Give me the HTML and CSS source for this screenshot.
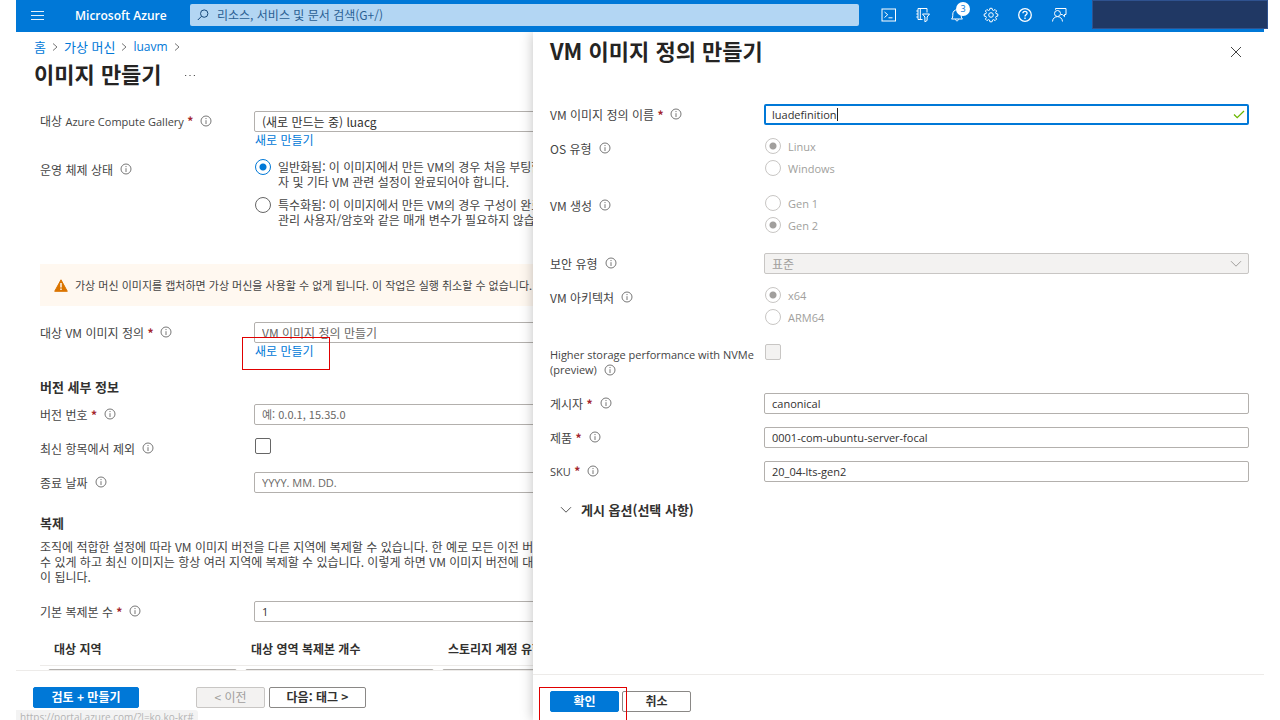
FILE: index.html
```html
<!DOCTYPE html>
<html lang="ko">
<head>
<meta charset="utf-8">
<meta name="viewport" content="width=device-width, initial-scale=1">
<title>이미지 만들기 - Microsoft Azure</title>
<link rel="stylesheet" href="styles.css">
</head>
<body>
<svg class="defs" aria-hidden="true">
  <symbol id="info" viewBox="0 0 12 12"><circle cx="6" cy="6" r="5" fill="none" stroke="currentColor"/><path d="M6 5.2V9M6 3v1.1" stroke="currentColor"/></symbol>
  <symbol id="chevron" viewBox="0 0 12 8"><path d="M1 1.2l5 5 5-5" fill="none" stroke="currentColor"/></symbol>
  <symbol id="crumb" viewBox="0 0 6 10"><path d="M1 1.5L5 5 1 8.500" fill="none" stroke="currentColor"/></symbol>
</svg>
<div class="shell">
  <header class="topbar">
    <button class="icon-btn menu-btn" aria-label="메뉴"><svg width="13" height="10" viewBox="0 0 13 10"><path d="M0 1.500h13M0 5.500h13M0 9.500h13" stroke="currentColor" stroke-width=".9"/></svg></button>
    <a class="brand" href="#">Microsoft Azure</a>
    <label class="search">
      <svg width="12" height="12" viewBox="0 0 12 12"><circle cx="7.200" cy="4.600" r="3.700" fill="none" stroke="currentColor"/><path d="M4.500 7.300L.8 11" stroke="currentColor"/></svg>
      <input class="search-input" type="search" placeholder="리소스, 서비스 및 문서 검색(G+/)" aria-label="검색">
    </label>
    <nav class="tools">
      <button class="icon-btn" aria-label="Cloud Shell"><svg width="16" height="14" viewBox="0 0 16 14"><rect x="1" y="1" width="13.500" height="12" fill="none" stroke="currentColor"/><path d="M3.500 4l3.200 2.700-3.200 2.800M7.500 9.800h4" fill="none" stroke="currentColor"/></svg></button>
      <button class="icon-btn" aria-label="디렉터리 및 구독"><svg width="16" height="16" viewBox="0 0 16 16" fill="none" stroke="currentColor"><path d="M7.500 12.500H3V1.500h9v4M5.300 1.500v11M1.300 4H3M1.300 7H3M1.300 10H3"/><path d="M7.500 7h7l-2.400 3v3.500l-2.200 1.300V10z"/></svg></button>
      <button class="icon-btn" aria-label="알림"><svg width="16" height="16" viewBox="0 0 16 16" fill="none" stroke="currentColor"><path d="M2.500 12c1.300-1 1.300-2.500 1.300-5a4.200 4.200 0 0 1 8.400 0c0 2.500 0 4 1.300 5zM6.500 12.300c0 2 3 2 3 0"/></svg><span class="badge latin">3</span></button>
      <button class="icon-btn" aria-label="설정"><svg width="16" height="16" viewBox="0 0 16 16" fill="none" stroke="currentColor"><circle cx="8" cy="8" r="2.300"/><path d="M6.900 1.300h2.200l.4 1.800 1 .4 1.600-1 1.500 1.500-1 1.600.4 1 1.800.4v2.100l-1.800.4-.4 1 1 1.600-1.500 1.500-1.600-1-1 .4-.4 1.800H6.900l-.4-1.800-1-.4-1.600 1-1.500-1.500 1-1.600-.4-1-1.800-.4V7l1.800-.4.4-1-1-1.600 1.500-1.500 1.600 1 1-.4z"/></svg></button>
      <button class="icon-btn" aria-label="도움말"><svg width="16" height="16" viewBox="0 0 16 16" fill="none" stroke="currentColor"><circle cx="8" cy="8" r="6.300" stroke-width="1.300"/><path d="M5.900 6.300c0-2.700 4.200-2.600 4.200-.1C10.100 7.800 8 7.700 8 9.500M8 10.600v1.300" stroke-width="1.300"/></svg></button>
      <button class="icon-btn" aria-label="피드백"><svg width="16" height="16" viewBox="0 0 16 16" fill="none" stroke="currentColor"><circle cx="6.500" cy="6.500" r="3"/><path d="M1.500 14.500c.4-6.500 9.600-6.500 10 0M4.500 2.700V1.500H15v6h-1.500v2.200l-2.200-2.200h-1.400"/></svg></button>
    </nav>
    <div class="account"></div>
  </header>

  <div class="workspace">
    <main class="blade">
      <nav class="crumbs">
        <a href="#">홈</a><svg class="crumb"><use href="#crumb"/></svg>
        <a href="#">가상 머신</a><svg class="crumb"><use href="#crumb"/></svg>
        <a class="crumb-latin" href="#">luavm</a><svg class="crumb"><use href="#crumb"/></svg>
      </nav>
      <div class="title-row"><h1 class="title">이미지 만들기</h1><button class="more" aria-label="추가 작업"><svg width="12" height="3" viewBox="0 0 12 3"><path d="M1 1.500h1.200M5.400 1.500h1.200M9.800 1.500h1.200" stroke="currentColor" stroke-width="1.200"/></svg></button></div>

      <form class="blade-form">
        <div class="row">
          <div class="label"><label for="gallery">대상 <span class="latin">Azure Compute Gallery</span> <span class="req">*</span></label><svg class="info"><use href="#info"/></svg></div>
          <div class="field"><input class="input" id="gallery" value="(새로 만드는 중) luacg"><a class="link" href="#">새로 만들기</a></div>
        </div>
        <div class="row state-row">
          <div class="label"><span>운영 체제 상태</span><svg class="info"><use href="#info"/></svg></div>
          <div class="options">
            <label class="option"><input class="radio" type="radio" name="state" checked><span>일반화됨: 이 이미지에서 만든 VM의 경우 처음 부팅할<br>자 및 기타 VM 관련 설정이 완료되어야 합니다.</span></label>
            <label class="option"><input class="radio" type="radio" name="state"><span>특수화됨: 이 이미지에서 만든 VM의 경우 구성이 완료<br>관리 사용자/암호와 같은 매개 변수가 필요하지 않습</span></label>
          </div>
        </div>
        <div class="warning">
          <svg width="14" height="13" viewBox="0 0 14 13"><path d="M7 .8L13.300 12.300H.7z" fill="#db7500" stroke="#db7500" stroke-linejoin="round"/><path d="M7 4v4.500M7 9.500v1.500" stroke="#fff" stroke-width="1.400"/></svg>
          <span>가상 머신 이미지를 캡처하면 가상 머신을 사용할 수 없게 됩니다. 이 작업은 실행 취소할 수 없습니다.</span>
        </div>
        <div class="row">
          <div class="label"><label for="definition">대상 VM 이미지 정의 <span class="req">*</span></label><svg class="info"><use href="#info"/></svg></div>
          <div class="field"><input class="input" id="definition" placeholder="VM 이미지 정의 만들기"><a class="link marked" href="#">새로 만들기</a></div>
        </div>

        <h2 class="section">버전 세부 정보</h2>
        <div class="stack">
          <div class="row">
            <div class="label"><label for="version">버전 번호 <span class="req">*</span></label><svg class="info"><use href="#info"/></svg></div>
            <input class="input mixed" id="version" placeholder="예: 0.0.1, 15.35.0">
          </div>
          <div class="row">
            <div class="label"><label for="exclude">최신 항목에서 제외</label><svg class="info"><use href="#info"/></svg></div>
            <input class="check" id="exclude" type="checkbox">
          </div>
          <div class="row">
            <div class="label"><label for="end">종료 날짜</label><svg class="info"><use href="#info"/></svg></div>
            <input class="input latin" id="end" placeholder="YYYY. MM. DD.">
          </div>
        </div>

        <h2 class="section replica-title">복제</h2>
        <p class="text">조직에 적합한 설정에 따라 VM 이미지 버전을 다른 지역에 복제할 수 있습니다. 한 예로 모든 이전 버<br>수 있게 하고 최신 이미지는 항상 여러 지역에 복제할 수 있습니다. 이렇게 하면 VM 이미지 버전에 대<br>이 됩니다.</p>
        <div class="row">
          <div class="label"><label for="count">기본 복제본 수 <span class="req">*</span></label><svg class="info"><use href="#info"/></svg></div>
          <input class="input latin" id="count" value="1">
        </div>
        <table class="regions">
          <thead><tr><th>대상 지역</th><th>대상 영역 복제본 개수</th><th>스토리지 계정 유형</th></tr></thead>
          <tbody><tr><td><select class="input" aria-label="대상 지역"></select></td><td><input class="input" aria-label="대상 영역 복제본 개수"></td><td><select class="input" aria-label="스토리지 계정 유형"></select></td></tr></tbody>
        </table>
      </form>

      <footer class="blade-footer">
        <button class="btn primary review">검토 + 만들기</button>
        <button class="btn prev" disabled>&lt; 이전</button>
        <button class="btn next">다음: 태그 &gt;</button>
      </footer>
      <div class="status">https://portal.azure.com/?l=ko.ko-kr#</div>
    </main>

    <aside class="panel">
      <header class="panel-head">
        <h2 class="title">VM 이미지 정의 만들기</h2>
        <button class="close" aria-label="닫기"><svg width="12" height="12" viewBox="0 0 12 12"><path d="M1 1l10 10M11 1L1 11" stroke="currentColor"/></svg></button>
      </header>
      <form class="panel-form">
        <div class="row">
          <div class="label"><label for="name">VM 이미지 정의 이름 <span class="req">*</span></label><svg class="info"><use href="#info"/></svg></div>
          <div class="active-field"><input class="input latin active" id="name" value="luadefinition"><span class="caret"></span><svg class="valid" width="12" height="9" viewBox="0 0 12 9"><path d="M1 4.500l3.200 3.200L11 1" fill="none" stroke="#6bb700" stroke-width="1.300"/></svg></div>
        </div>
        <div class="row choice-row">
          <div class="label"><span>OS 유형</span><svg class="info"><use href="#info"/></svg></div>
          <div class="choices latin">
            <label class="choice"><input class="radio" type="radio" name="os" checked disabled>Linux</label>
            <label class="choice"><input class="radio" type="radio" name="os" disabled>Windows</label>
          </div>
        </div>
        <div class="row choice-row">
          <div class="label"><span>VM 생성</span><svg class="info"><use href="#info"/></svg></div>
          <div class="choices latin">
            <label class="choice"><input class="radio" type="radio" name="gen" disabled>Gen 1</label>
            <label class="choice"><input class="radio" type="radio" name="gen" checked disabled>Gen 2</label>
          </div>
        </div>
        <div class="row security-row">
          <div class="label"><label for="security">보안 유형</label><svg class="info"><use href="#info"/></svg></div>
          <div class="select-wrap"><select class="input" id="security" disabled><option>표준</option></select><svg class="chevron"><use href="#chevron"/></svg></div>
        </div>
        <div class="row choice-row">
          <div class="label"><span>VM 아키텍처</span><svg class="info"><use href="#info"/></svg></div>
          <div class="choices latin">
            <label class="choice"><input class="radio" type="radio" name="arch" checked disabled>x64</label>
            <label class="choice"><input class="radio" type="radio" name="arch" disabled>ARM64</label>
          </div>
        </div>
        <div class="row nvme-row">
          <div class="label wrap latin"><label for="nvme">Higher storage performance with NVMe (preview)</label><svg class="info"><use href="#info"/></svg></div>
          <input class="check" id="nvme" type="checkbox" disabled>
        </div>
        <div class="stack">
          <div class="row">
            <div class="label"><label for="publisher">게시자 <span class="req">*</span></label><svg class="info"><use href="#info"/></svg></div>
            <input class="input latin" id="publisher" value="canonical">
          </div>
          <div class="row">
            <div class="label"><label for="offer">제품 <span class="req">*</span></label><svg class="info"><use href="#info"/></svg></div>
            <input class="input latin" id="offer" value="0001-com-ubuntu-server-focal">
          </div>
          <div class="row">
            <div class="label"><label for="sku"><span class="latin">SKU</span> <span class="req">*</span></label><svg class="info"><use href="#info"/></svg></div>
            <input class="input latin" id="sku" value="20_04-lts-gen2">
          </div>
        </div>
        <button class="expander" type="button"><svg class="chevron-open"><use href="#chevron"/></svg>게시 옵션(선택 사항)</button>
      </form>
      <footer class="panel-footer">
        <span class="marked ok-mark"><button class="btn primary">확인</button></span>
        <button class="btn">취소</button>
      </footer>
    </aside>
  </div>
</div>
</body>
</html>
```

FILE: styles.css
```css
*, *::after { box-sizing: border-box; }

body {
  margin: 0;
  background: #fff;
  color: #323130;
  font: 12px/15px "Noto Sans CJK KR", "Open Sans", sans-serif;
}

button, input, select { font: inherit; color: inherit; margin: 0; }
a { color: #0078d7; text-decoration: none; }
h1, h2, p { margin: 0; }
.defs { position: absolute; width: 0; height: 0; }
.latin { font-family: "Open Sans", "Noto Sans CJK KR", sans-serif; font-size: 11px; }

.shell {
  display: flex;
  flex-direction: column;
  height: 100vh;
  padding: 0 16px;
  overflow: hidden;
}

/* Top bar */
.topbar {
  display: flex;
  align-items: flex-start;
  flex: none;
  height: 32px;
  background: #0078d7;
  color: #fff;
}
.icon-btn {
  position: relative;
  display: flex;
  align-items: center;
  justify-content: center;
  width: 34px;
  height: 30px;
  padding: 0;
  border: 0;
  background: none;
}
.menu-btn { width: 42px; }
.brand {
  width: 132px;
  padding-left: 17px;
  color: #fff;
  font-family: "Open Sans", sans-serif;
  font-size: 12px;
  font-weight: 600;
  line-height: 31px;
}
.search {
  display: flex;
  flex: 1;
  align-items: center;
  gap: 8px;
  height: 22px;
  margin-top: 4px;
  padding: 0 7px;
  border-radius: 2px;
  background: #b3d6f3;
  color: #17497a;
}
.search-input {
  flex: 1;
  height: 20px;
  padding: 0 0 2px;
  border: 0;
  outline: 0;
  background: none;
}
.search-input::placeholder { color: #2a5f94; opacity: 1; }
.tools { display: flex; margin: 0 16px 0 13px; }
.badge {
  position: absolute;
  top: 2px;
  right: 4px;
  width: 14px;
  height: 14px;
  border-radius: 50%;
  background: #fff;
  color: #0078d7;
  font-size: 9px;
  line-height: 14px;
}
.account {
  width: 176px;
  height: 29px;
  margin-right: -4px;
  border: 1px solid #2f528f;
  background: #203864;
}

/* Blade behind the panel */
.workspace { position: relative; flex: 1; min-height: 0; overflow: hidden; }
.blade { display: flex; flex-direction: column; height: 100%; }
.crumbs {
  display: flex;
  align-items: center;
  gap: 6px;
  padding: 7px 0 0 18px;
  font-size: 13px;
  line-height: 16px;
}
.crumb-latin { font-family: "Open Sans", sans-serif; font-size: 12px; }
.crumb { width: 6px; height: 10px; color: #777; }
.title-row { display: flex; align-items: center; gap: 22px; padding: 4px 18px 0; }
.title { color: #252423; font-size: 22px; font-weight: 700; line-height: 28px; }
.more { padding: 0; border: 0; background: none; color: #555; line-height: 3px; }
.blade-form {
  flex: 1;
  min-height: 0;
  overflow: hidden;
  padding: 24px 24px 0;
  white-space: nowrap;
}

.row { display: grid; grid-template-columns: 214px 1fr; align-items: start; }
.label { display: flex; align-items: center; gap: 7px; height: 20px; color: #444; }
.label.wrap { display: block; height: auto; white-space: normal; }
.label.wrap .info { margin-left: 7px; vertical-align: -2px; }
.req { color: #a4262c; font-weight: 700; }
.info { flex: none; width: 12px; height: 12px; color: #777; }
.field { display: flex; flex-direction: column; align-items: flex-start; }
.link { position: relative; padding-left: 1px; line-height: 15px; }

.input {
  width: 100%;
  height: 21px;
  padding: 0 7px 1px;
  border: 1px solid #b3b0ad;
  border-radius: 2px;
  outline: 0;
  background: #fff;
}
.input::placeholder { color: #6a6866; opacity: 1; }
.input:disabled { border-color: #c8c6c4; background: #f3f2f1; color: #a19f9d; opacity: 1; }
select.input { appearance: none; }
.mixed { font-size: 11px; }

.radio {
  flex: none;
  width: 16px;
  height: 16px;
  appearance: none;
  border: 1px solid #666;
  border-radius: 50%;
  background: #fff;
}
.radio:checked { border-color: #0078d7; background: radial-gradient(circle, #0078d7 3px, #fff 4px); }
.radio:disabled { border-color: #c8c6c4; }
.radio:disabled:checked { background: radial-gradient(circle, #a19f9d 3px, #fff 4px); }
.check {
  width: 16px;
  height: 16px;
  margin-left: 1px;
  appearance: none;
  border: 1px solid #666;
  border-radius: 2px;
  background: #fff;
}
.check:disabled { border-color: #c8c6c4; background: #f3f2f1; }

.state-row { margin-top: 12px; }
.options { display: flex; flex-direction: column; gap: 8px; padding-left: 1px; }
.option { display: flex; gap: 7px; color: #444; }
.warning {
  display: flex;
  align-items: center;
  gap: 7px;
  height: 42px;
  margin: 37px 0 16px;
  padding-left: 14px;
  background: #fff8f0;
  color: #444;
  font-size: 11px;
}
.section { font-size: 13px; font-weight: 700; line-height: 16px; margin: 21px 0 9px; }
.stack { display: flex; flex-direction: column; gap: 13px; }
.stack .row { min-height: 21px; }
.replica-title { margin: 22px 0 8px; }
.text { margin-bottom: 17px; color: #444; }
.regions {
  width: 100%;
  margin-top: 11px;
  border-collapse: collapse;
  table-layout: fixed;
}
.regions th:first-child { width: 197px; }
.regions th:nth-child(2) { width: 197px; }
.regions th {
  height: 32px;
  padding: 0 14px;
  border-bottom: 1px solid #edebe9;
  text-align: left;
  font-weight: 700;
}
.regions td { padding: 3px 0 0 8px; }

.btn {
  min-width: 69px;
  height: 21px;
  padding: 0 8px 2px;
  border: 1px solid #8a8886;
  border-radius: 2px;
  background: #fff;
  font-weight: 700;
  line-height: 15px;
}
.btn.primary { border-color: #0078d7; background: #0078d7; color: #fff; }
.btn:disabled { border-color: #c8c6c4; background: #f3f2f1; color: #a19f9d; font-weight: 400; }
.blade-footer {
  display: flex;
  align-items: flex-start;
  gap: 4px;
  flex: none;
  height: 50px;
  padding: 16px 17px 0;
  border-top: 1px solid #edebe9;
}
.review { width: 106px; margin-right: 53px; }
.next { width: 97px; }
.status {
  position: absolute;
  left: 0;
  bottom: -5px;
  height: 15px;
  padding: 0 4px;
  border-radius: 0 3px 0 0;
  background: #f3f3f3;
  color: #b4b4b4;
  font-family: "Open Sans", sans-serif;
  font-size: 10px;
  white-space: nowrap;
}

/* Side panel over the blade */
.panel {
  position: absolute;
  top: 0;
  right: 0;
  bottom: 0;
  display: flex;
  flex-direction: column;
  width: calc(100% - 517px);
  min-width: 480px;
  background: #fff;
  box-shadow: 0 0 12px rgba(0, 0, 0, .25);
}
.panel-head { display: flex; justify-content: space-between; padding: 4px 22px 0 17px; }
.close { padding: 4px 0 0; border: 0; background: none; color: #444; }
.panel-form { flex: 1; min-height: 0; overflow: hidden; padding: 40px 15px 0 17px; }
.active-field, .select-wrap { position: relative; }
.active { border: 2px solid #0078d7; padding: 0 6px; display: block; }
.select-wrap .input { display: block; }
.caret { position: absolute; left: 73px; top: 4px; width: 1px; height: 13px; background: #222; }
.valid { position: absolute; right: 4px; top: 6px; }
.chevron { position: absolute; right: 7px; top: 7px; width: 12px; height: 8px; color: #a19f9d; }
.choice-row { margin-top: 13px; }
.choices { display: flex; flex-direction: column; gap: 6px; padding-left: 1px; }
.choice { display: flex; align-items: center; gap: 7px; color: #a19f9d; }
.choice-row + .choice-row { margin-top: 19px; }
.security-row { margin-top: 20px; }
.nvme-row { margin-top: 22px; }
.nvme-row .check { margin-top: -3px; }
.nvme-row + .stack { margin-top: 16px; }
.expander {
  display: flex;
  align-items: center;
  gap: 9px;
  margin-top: 20px;
  padding: 0 10px;
  border: 0;
  background: none;
  font-size: 13px;
  font-weight: 700;
  line-height: 16px;
}
.chevron-open { width: 12px; height: 8px; color: #555; }
.panel-footer {
  display: flex;
  align-items: flex-start;
  gap: 3px;
  flex: none;
  height: 46px;
  padding: 16px 17px 0;
  border-top: 1px solid #edebe9;
}

/* Red callout frames */
.marked::after {
  content: "";
  position: absolute;
  top: -6px;
  left: -12px;
  width: 88px;
  height: 33px;
  border: 1px solid #e00000;
  pointer-events: none;
}
.ok-mark { position: relative; }
.ok-mark::after { top: -4px; left: -11px; height: 38px; }
```
